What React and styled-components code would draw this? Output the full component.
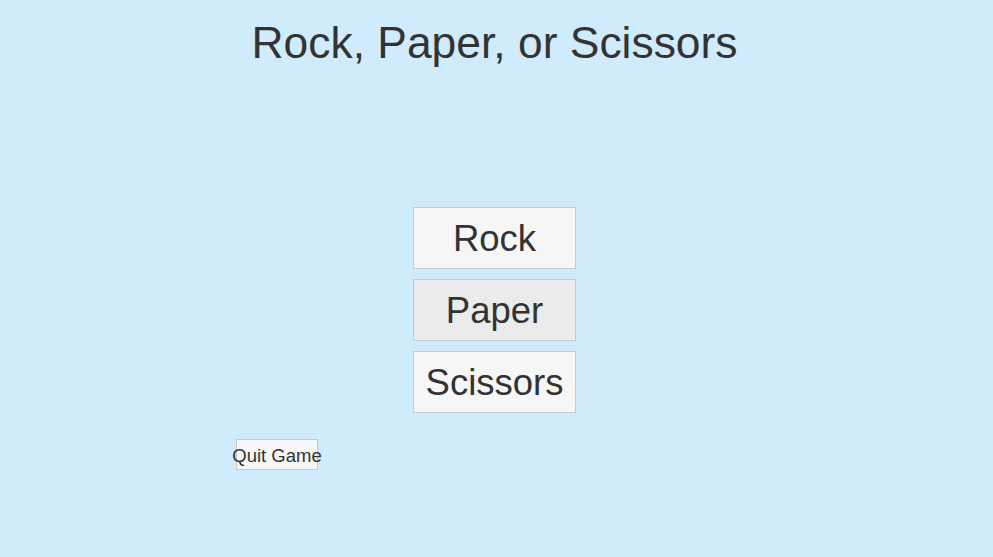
import React from 'react';
import styled, { createGlobalStyle } from 'styled-components';

const GlobalStyle = createGlobalStyle`
  html, body {
    margin: 0;
    padding: 0;
    background: #cfebfc;
  }
  body {
    font-family: "Liberation Sans", Arial, sans-serif;
    color: #333333;
  }
`;

const Page = styled.div`
  width: 989px;
  height: 557px;
  display: flex;
  flex-direction: column;
  background: #cfebfc;
  overflow: hidden;
`;

const Title = styled.h1`
  margin: 17px 0 0;
  font-size: 44.4px;
  font-weight: normal;
  line-height: 52px;
  text-align: center;
  color: #333333;
`;

const Choices = styled.div`
  margin-top: 138px;
  display: flex;
  flex-direction: column;
  align-items: center;
  gap: 10px;
`;

const ChoiceButton = styled.button`
  width: 163px;
  height: 62px;
  padding: 2px 0 0;
  font-family: "Liberation Sans", Arial, sans-serif;
  font-size: 36.5px;
  color: #333333;
  background: ${p => (p.$active ? '#ebebeb' : '#f6f6f6')};
  border: 1px solid #c4c9cc;
  border-radius: 0;
  cursor: pointer;
  white-space: nowrap;
`;

const Footer = styled.div`
  margin-top: 26px;
  padding-left: 236px;
  display: flex;
`;

const QuitButton = styled.button`
  width: 82px;
  height: 31px;
  padding: 2px 0 0;
  display: flex;
  align-items: center;
  justify-content: center;
  overflow: visible;
  white-space: nowrap;
  font-family: "Liberation Sans", Arial, sans-serif;
  font-size: 18.5px;
  color: #333333;
  background: #f6f6f6;
  border: 1px solid #c4c9cc;
  border-radius: 0;
  cursor: pointer;
`;

const choices = ['Rock', 'Paper', 'Scissors'];

export default function App() {
  return (
    <Page>
      <GlobalStyle />
      <Title>Rock, Paper, or Scissors</Title>
      <Choices>
        {choices.map(c => (
          <ChoiceButton key={c} $active={c === 'Paper'}>{c}</ChoiceButton>
        ))}
      </Choices>
      <Footer>
        <QuitButton>Quit Game</QuitButton>
      </Footer>
    </Page>
  );
}
